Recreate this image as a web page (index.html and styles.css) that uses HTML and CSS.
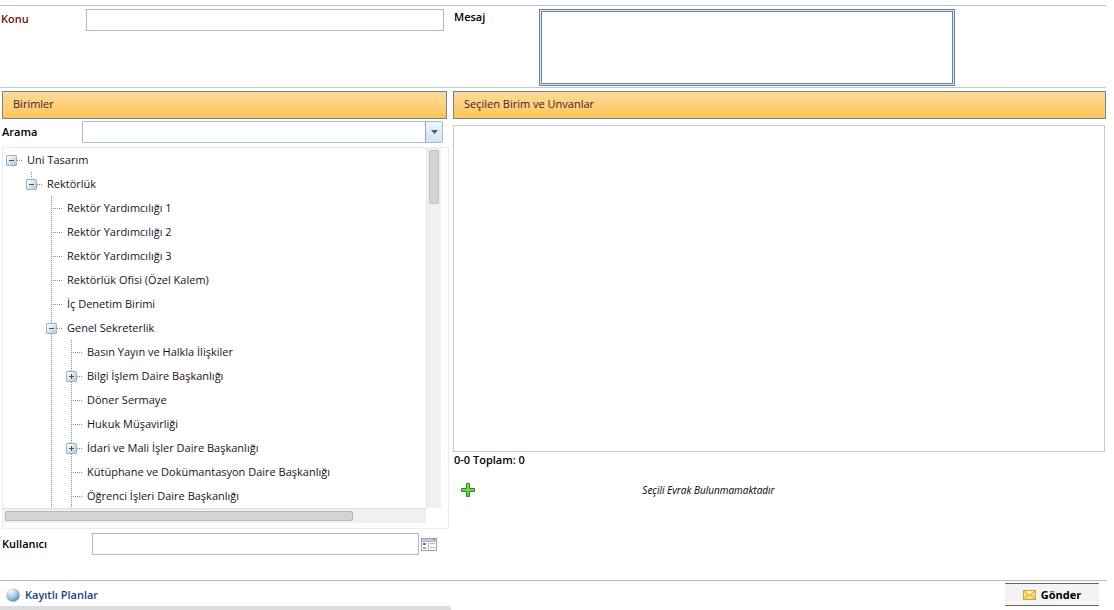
FILE: index.html
```html
<!DOCTYPE html>
<html lang="tr">
<head>
<meta charset="utf-8">
<title>Birimler</title>
<link rel="stylesheet" href="styles.css">
</head>
<body>
<form class="page">
  <section class="message">
    <div class="field">
      <label class="label required" for="subject">Konu</label>
      <input class="box subject" id="subject" type="text">
    </div>
    <div class="field">
      <label class="label" for="body">Mesaj</label>
      <textarea class="body" id="body"></textarea>
    </div>
  </section>

  <main class="columns">
    <section class="units">
      <h2 class="bar">Birimler</h2>
      <div class="search">
        <label class="label" for="search">Arama</label>
        <div class="combo">
          <input class="combo-input" id="search" type="text">
          <button class="combo-button" type="button" aria-label="Listeyi aç"><svg width="7" height="4" viewBox="0 0 7 4"><path d="M0 0h7L3.500 4z" fill="#47597c"/></svg></button>
        </div>
      </div>
      <div class="tree-panel">
        <div class="tree-view">
          <ul class="tree">
            <li><div class="row"><button class="toggle" type="button" aria-label="Daralt"></button><i class="stub short"></i><span>Uni Tasarım</span></div>
              <ul class="tree single">
                <li><div class="row"><button class="toggle" type="button" aria-label="Daralt"></button><i class="stub short"></i><span>Rektörlük</span></div>
                  <ul class="tree guide">
                    <li class="row"><i class="stub"></i><span>Rektör Yardımcılığı 1</span></li>
                    <li class="row"><i class="stub"></i><span>Rektör Yardımcılığı 2</span></li>
                    <li class="row"><i class="stub"></i><span>Rektör Yardımcılığı 3</span></li>
                    <li class="row"><i class="stub"></i><span>Rektörlük Ofisi (Özel Kalem)</span></li>
                    <li class="row"><i class="stub"></i><span>İç Denetim Birimi</span></li>
                    <li><div class="row"><button class="toggle" type="button" aria-label="Daralt"></button><i class="stub short"></i><span>Genel Sekreterlik</span></div>
                      <ul class="tree guide">
                        <li class="row"><i class="stub"></i><span>Basın Yayın ve Halkla İlişkiler</span></li>
                        <li class="row"><button class="toggle closed" type="button" aria-label="Genişlet"></button><i class="stub short"></i><span>Bilgi İşlem Daire Başkanlığı</span></li>
                        <li class="row"><i class="stub"></i><span>Döner Sermaye</span></li>
                        <li class="row"><i class="stub"></i><span>Hukuk Müşavirliği</span></li>
                        <li class="row"><button class="toggle closed" type="button" aria-label="Genişlet"></button><i class="stub short"></i><span>İdari ve Mali İşler Daire Başkanlığı</span></li>
                        <li class="row"><i class="stub"></i><span>Kütüphane ve Dokümantasyon Daire Başkanlığı</span></li>
                        <li class="row"><i class="stub"></i><span>Öğrenci İşleri Daire Başkanlığı</span></li>
                      </ul>
                    </li>
                  </ul>
                </li>
              </ul>
            </li>
          </ul>
        </div>
        <div class="track-y"><div class="thumb-y"></div></div>
        <div class="track-x"><div class="thumb-x"></div></div>
      </div>
      <div class="user">
        <label class="label" for="user">Kullanıcı</label>
        <input class="box user-input" id="user" type="text">
        <button class="icon-button" type="button" aria-label="Kullanıcı seç">
          <svg width="16" height="13" viewBox="0 0 16 13"><rect x=".5" y=".5" width="15" height="12" fill="#fbfcff" stroke="#9fa2b2"/><path d="M1 1h14v2H1z" fill="#c3c7df"/><path d="M12 1.500h2" stroke="#7f86ad"/><path d="M7.500 3v9M1 3.500h14" stroke="#b4b8c6"/><path d="M2 5h3v2H2z" fill="#4d7fbd"/><path d="M2 9h3v2H2z" fill="#d9ad35"/><path d="M9 5.500h5M9 9.500h5" stroke="#b9bbc6"/></svg>
        </button>
      </div>
    </section>

    <section class="selected">
      <h2 class="bar">Seçilen Birim ve Unvanlar</h2>
      <div class="list"></div>
      <p class="total">0-0 Toplam: 0</p>
      <div class="documents">
        <button class="icon-button" type="button" aria-label="Ekle">
          <svg width="14" height="14" viewBox="0 0 14 14"><defs><linearGradient id="green" x2="0" y2="1"><stop stop-color="#8fd66c"/><stop offset="1" stop-color="#4fd31f"/></linearGradient></defs><path d="M5.500.5h3v5h5v3h-5v5h-3v-5h-5v-3h5z" fill="url(#green)" stroke="#2c8a27"/></svg>
        </button>
        <p class="empty">Seçili Evrak Bulunmamaktadır</p>
      </div>
    </section>
  </main>

  <footer class="footer">
    <a class="plans" href="#">
      <svg width="14" height="14" viewBox="0 0 14 14"><defs><radialGradient id="ball" cx=".35" cy=".25" r=".85"><stop stop-color="#f4fafd"/><stop offset=".5" stop-color="#a5cbe1"/><stop offset="1" stop-color="#4a86b0"/></radialGradient></defs><circle cx="7" cy="7" r="6.800" fill="url(#ball)"/></svg>
      Kayıtlı Planlar</a>
    <button class="send" type="submit">
      <svg width="13" height="10" viewBox="0 0 13 10"><rect x=".5" y=".5" width="12" height="9" fill="#fbdf72" stroke="#c9a545"/><path d="M2 1h9L6.500 5z" fill="#fff3b4"/><path d="M1 1l5.500 4.500L12 1M1 9l4-4M12 9L8 5" fill="none" stroke="#d2a63c"/></svg>
      Gönder</button>
  </footer>
  <div class="page-scroll"></div>
</form>
</body>
</html>
```
FILE: styles.css
```css
* {
  box-sizing: border-box;
}

body {
  margin: 0;
  background: #fff;
  color: #000;
  font: 11px/16px "Open Sans", "Noto Sans", sans-serif;
}

input,
textarea,
button {
  margin: 0;
  padding: 0;
  border: 0;
  background: none;
  color: inherit;
  font: inherit;
}

h2,
p,
ul {
  margin: 0;
  padding: 0;
  font: inherit;
  list-style: none;
}

svg {
  display: block;
  flex: none;
}

.page {
  padding-top: 5px;
}

.message,
.columns {
  display: grid;
  grid-template-columns: minmax(0, 449fr) minmax(0, 653fr);
  column-gap: 4px;
  margin-right: 8px;
}

.message {
  border-top: 1px solid #c0c8cd;
  border-bottom: 1px solid #c0c8cd;
  padding-top: 3px;
}

.field {
  display: flex;
  align-items: flex-start;
}

.label {
  flex: none;
  width: 85px;
  padding-left: 1px;
  font-weight: 600;
}

.required {
  width: 86px;
  padding-top: 2px;
  color: #6b0f14;
}

.box {
  height: 22px;
  border: 1px solid #abbac8;
  background: #fff;
}

.subject {
  flex: 1;
  min-width: 0;
  margin-right: 5px;
}

.body {
  flex: 1;
  min-width: 0;
  height: 77px;
  margin: 0 151px 1px 1px;
  border: 1px solid #6485a0;
  background: #fff;
  box-shadow: inset 0 0 0 1px #dce9f4, inset 0 0 0 2px #6485a0;
  resize: none;
}

.bar {
  height: 28px;
  border: 1px solid #71858c;
  padding: 4px 10px;
  background: linear-gradient(#fddb9d, #ffc558);
  color: #3e2032;
}

.units {
  padding-top: 3px;
}

.units .bar {
  margin: 0 2px;
}

.selected {
  padding-top: 3px;
}

.search {
  display: flex;
  align-items: center;
  margin: 2px 6px 0 1px;
}

.search .label {
  width: 81px;
}

.combo {
  display: flex;
  flex: 1;
  height: 22px;
  border: 1px solid #a8bcca;
  border-radius: 2px;
  overflow: hidden;
}

.combo-input {
  flex: 1;
  min-width: 0;
}

.combo-button {
  display: grid;
  width: 17px;
  place-items: center;
  border-left: 1px solid #8ba6c3;
  background: linear-gradient(#edf5ff, #d4e3f8);
}

.tree-panel {
  display: grid;
  grid-template-columns: minmax(0, 1fr) 15px;
  margin: 4px 0 0 2px;
  border: 1px solid #ececec;
  padding: 0 7px 5px 0;
}

.tree-view {
  overflow: hidden;
}

.tree .tree {
  margin-left: 20px;
}

.row {
  display: flex;
  align-items: center;
  height: 24px;
  padding-left: 3px;
  color: #21101f;
  white-space: nowrap;
}

.guide,
.single {
  background: repeating-linear-gradient(#85898c 0 1px, transparent 1px 2px) 8px 0 / 1px 100% no-repeat;
}

.single {
  background-size: 1px 6px;
}

.toggle {
  flex: none;
  width: 11px;
  height: 11px;
  border: 1px solid #9cb2be;
  border-radius: 1px;
  background:
    linear-gradient(#345a75, #345a75) center / 5px 1px no-repeat,
    linear-gradient(135deg, #fff, #b5cbd7);
}

.closed {
  background:
    linear-gradient(#345a75, #345a75) center / 5px 1px no-repeat,
    linear-gradient(#345a75, #345a75) center / 1px 5px no-repeat,
    linear-gradient(135deg, #fff, #b5cbd7);
}

.stub {
  flex: none;
  width: 11px;
  height: 1px;
  margin: 0 5px;
  background: repeating-linear-gradient(90deg, #85898c 0 1px, transparent 1px 2px);
}

.short {
  width: 5px;
  margin-left: 0;
}

.track-y {
  border-left: 1px solid #e4e4e4;
  padding: 2px;
  background: #f0f0f0;
}

.thumb-y {
  height: 54px;
  border: 1px solid #c0c0c0;
  border-radius: 2px;
  background: #d4d4d4;
}

.track-x {
  border-top: 1px solid #dedede;
  padding: 2px;
  background: #f0f0f0;
}

.thumb-x {
  width: 83%;
  height: 10px;
  border: 1px solid #b8b8b8;
  border-radius: 2px;
  background: #d4d4d4;
}

.user {
  display: flex;
  align-items: center;
  margin: 4px 12px 25px 1px;
}

.user .label {
  width: 91px;
}

.user-input {
  flex: 1;
  min-width: 0;
  margin-right: 2px;
}

.list {
  height: 327px;
  margin: 6px 1px 0 0;
  border: 1px solid #c8cbcd;
}

.total {
  padding-left: 1px;
  font-weight: 600;
}

.documents {
  display: grid;
  grid-template-columns: 14px minmax(0, 1fr);
  align-items: center;
  margin-top: 14px;
  padding-left: 8px;
}

.empty {
  width: 74%;
  font-size: 10px;
  font-style: italic;
  text-align: center;
}

.footer {
  display: flex;
  align-items: center;
  justify-content: space-between;
  margin-right: 7px;
  border-top: 1px solid #b9b9b9;
  padding: 2px 8px 0 6px;
}

.plans {
  display: flex;
  align-items: center;
  gap: 5px;
  color: #1a3f7f;
  font-weight: 600;
  text-decoration: none;
}

.send {
  display: flex;
  align-items: center;
  justify-content: center;
  gap: 5px;
  width: 94px;
  height: 23px;
  border-top: 1px solid #66686b;
  border-bottom: 1px solid #66686b;
  background: #f4f4f4;
  font-weight: 700;
}

.page-scroll {
  width: 451px;
  height: 4px;
  border-radius: 0 3px 0 0;
  background: #dcdcdc;
}
```
